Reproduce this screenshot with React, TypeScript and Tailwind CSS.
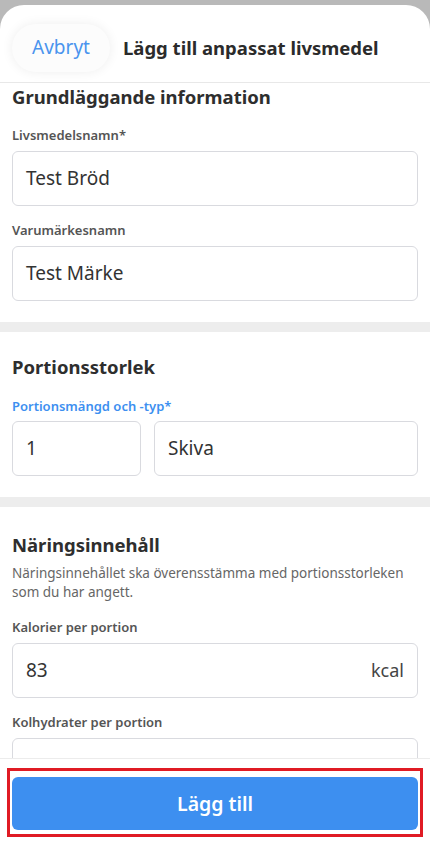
import React from "react";

const font = { fontFamily: '"Noto Sans", "Open Sans", sans-serif' };

function Label({ children, blue }: { children: React.ReactNode; blue?: boolean }) {
  return (
    <div
      className={
        "text-[13px] leading-[18px] font-semibold " +
        (blue ? "text-[#3d8ff0]" : "text-[#555555]")
      }
    >
      {children}
    </div>
  );
}

function Input({ value, suffix, className }: { value: string; suffix?: string; className?: string }) {
  return (
    <div
      className={
        "h-[55px] rounded-[6px] border border-[#d9dadf] flex items-center px-[13px] text-[19px] text-[#333333] " +
        (className ?? "")
      }
    >
      <span className="flex-1">{value}</span>
      {suffix && <span className="text-[18px] text-[#444444]">{suffix}</span>}
    </div>
  );
}

export default function App() {
  return (
    <div className="w-[430px] h-[852px] bg-[#b9b9b9] pt-[5px] overflow-hidden" style={font}>
      <div className="h-full bg-white rounded-t-[24px] flex flex-col overflow-hidden">
        {/* Header */}
        <div className="h-[78px] shrink-0 border-b border-[#e8e8e8] flex items-center px-[12px] pt-[8px] gap-[13px]">
          <div className="h-[48px] w-[98px] rounded-full bg-[#fcfcfc] shadow-[0_0_12px_rgba(0,0,0,0.07)] flex items-center justify-center text-[19px] text-[#4a94ee]">
            Avbryt
          </div>
          <div className="text-[18.5px] font-bold text-[#2b2b2b] whitespace-nowrap">Lägg till anpassat livsmedel</div>
        </div>

        {/* Content */}
        <div className="flex-1 overflow-hidden">
          <div className="px-[12px] pt-[2px] pb-[21px]">
            <div className="text-[18.5px] leading-[24px] font-bold text-[#2e2e2e]">Grundläggande information</div>
            <div className="mt-[17px]">
              <Label>Livsmedelsnamn*</Label>
              <Input className="mt-[7px]" value="Test Bröd" />
            </div>
            <div className="mt-[15px]">
              <Label>Varumärkesnamn</Label>
              <Input className="mt-[7px]" value="Test Märke" />
            </div>
          </div>
          <div className="h-[10px] bg-[#ededed]" />

          <div className="px-[12px] pt-[23px] pb-[21px]">
            <div className="text-[18.5px] leading-[24px] font-bold text-[#2e2e2e]">Portionsstorlek</div>
            <div className="mt-[18px]">
              <Label blue>Portionsmängd och -typ*</Label>
              <div className="mt-[6px] flex gap-[13px]">
                <Input className="w-[129px]" value="1" />
                <Input className="flex-1" value="Skiva" />
              </div>
            </div>
          </div>
          <div className="h-[10px] bg-[#ededed]" />

          <div className="px-[12px] pt-[26px]">
            <div className="text-[18.5px] leading-[24px] font-bold text-[#2e2e2e]">Näringsinnehåll</div>
            <div className="mt-[7px] text-[13.5px] leading-[19px] text-[#666666]">
              Näringsinnehållet ska överensstämma med portionsstorleken som du har angett.
            </div>
            <div className="mt-[16px]">
              <Label>Kalorier per portion</Label>
              <Input className="mt-[7px]" value="83" suffix="kcal" />
            </div>
            <div className="mt-[15px]">
              <Label>Kolhydrater per portion</Label>
              <Input className="mt-[7px]" value="15,5" />
            </div>
          </div>
        </div>

        {/* Footer */}
        <div className="h-[94px] shrink-0 border-t border-[#ececec] bg-white pt-[9px] px-[7px]">
          <div className="h-[69px] border-[3px] border-[#e01b24] px-[2px] pt-[6px]">
            <div className="h-[53px] rounded-[6px] bg-[#3d8ff0] flex items-center justify-center text-[19.5px] font-semibold text-white">
              Lägg till
            </div>
          </div>
        </div>
      </div>
    </div>
  );
}
